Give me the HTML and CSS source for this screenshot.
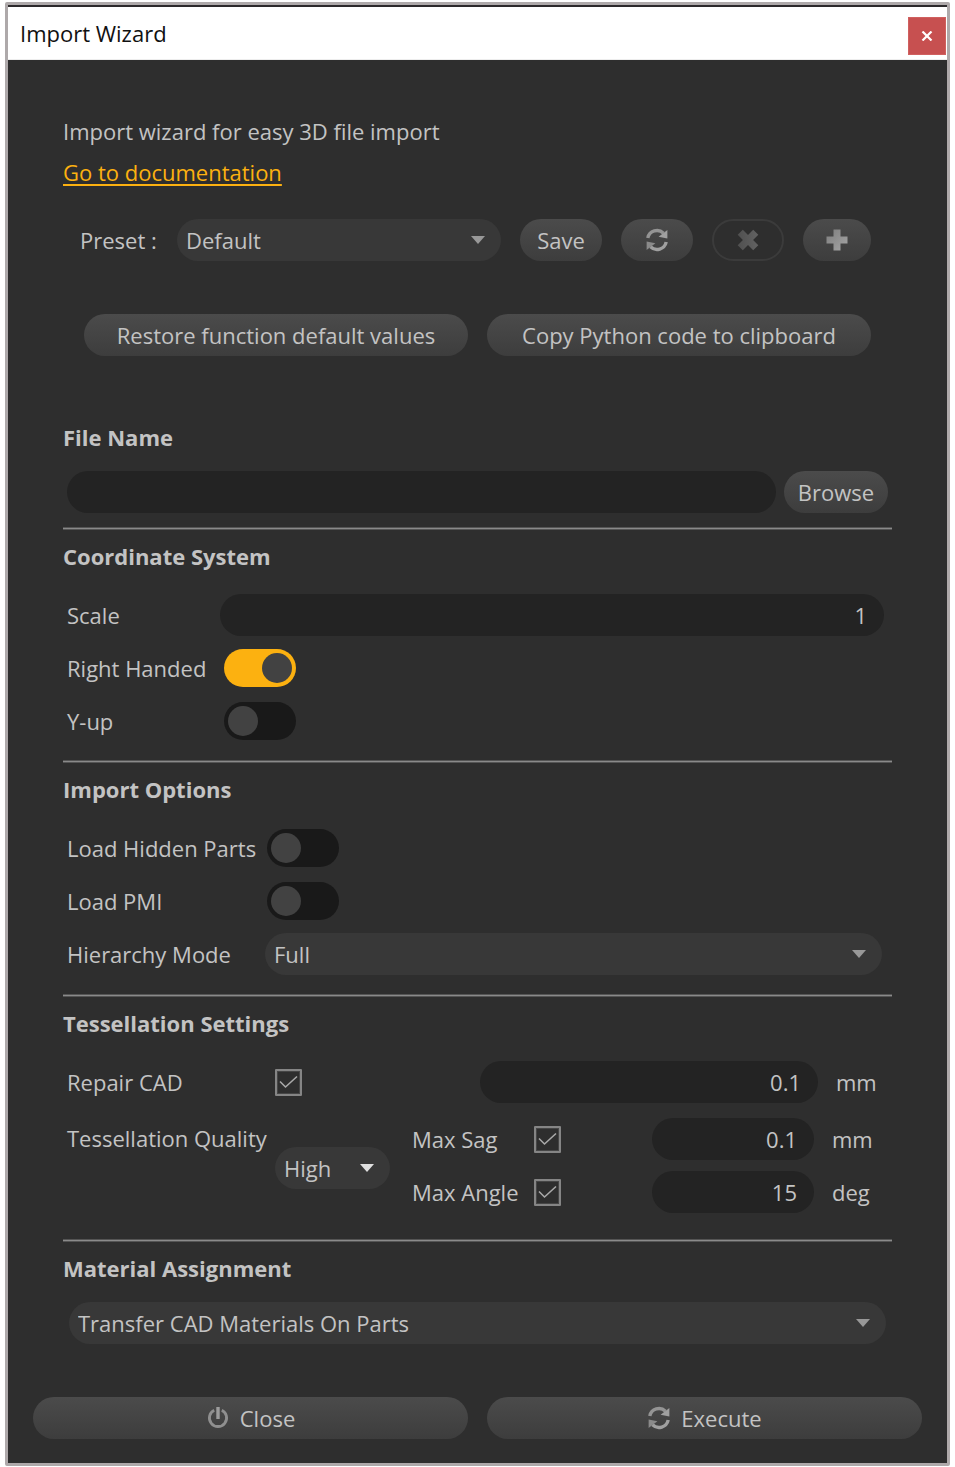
FILE: index.html
```html
<!DOCTYPE html>
<html lang="en">
<head>
<meta charset="utf-8">
<meta name="viewport" content="width=device-width, initial-scale=1">
<title>Import Wizard</title>
<link rel="stylesheet" href="styles.css">
</head>
<body>
<svg class="defs" width="0" height="0" aria-hidden="true">
  <defs>
    <linearGradient id="shine" x1="0" y1="0" x2="1" y2="1">
      <stop offset="0" stop-color="#7d7d7d"/>
      <stop offset="1" stop-color="#a6a6a6"/>
    </linearGradient>
    <linearGradient id="dim" x1="0" y1="0" x2="1" y2="0">
      <stop offset="0" stop-color="#505050"/>
      <stop offset="1" stop-color="#626262"/>
    </linearGradient>
    <symbol id="refresh" viewBox="0 0 24 24">
      <path d="M2.800 10 A9.400 9.400 0 0 1 18.500 5.200" fill="none" stroke="#949494" stroke-width="3.400"/>
      <path d="M22.400 2 V10.500 L13.600 8.800 Z" fill="#a0a0a0"/>
      <path d="M21.200 14 A9.400 9.400 0 0 1 5.500 18.800" fill="none" stroke="#a0a0a0" stroke-width="3.400"/>
      <path d="M1.600 22 V13.500 L10.400 15.200 Z" fill="#8a8a8a"/>
    </symbol>
    <symbol id="arrow" viewBox="0 0 14 8">
      <path d="M0 0 H14 L7 8 Z" fill="currentColor"/>
    </symbol>
    <symbol id="tick" viewBox="0 0 27 27">
      <path d="M5 12.500 L10.500 18 L22 7.500" fill="none" stroke="#a9a9a9" stroke-width="1.600"/>
    </symbol>
  </defs>
</svg>

<main class="window">
  <header class="titlebar">
    <h1 class="title">Import Wizard</h1>
    <button class="close-window" type="button" aria-label="Close window">
      <svg width="12" height="10" viewBox="0 0 12 10"><path d="M1.500 0.500 L10.500 9.500 M10.500 0.500 L1.500 9.500" stroke="#fff" stroke-width="2.200"/></svg>
    </button>
  </header>

  <form class="content">
    <p class="intro">Import wizard for easy 3D file import</p>
    <a class="doc-link" href="#documentation">Go to documentation</a>

    <div class="preset-row">
      <label class="preset-label" for="preset">Preset :</label>
      <span class="select grow">
        <select id="preset"><option>Default</option></select>
        <svg class="arrow"><use href="#arrow"/></svg>
      </span>
      <button class="btn btn-save" type="button">Save</button>
      <button class="btn btn-icon" type="button" aria-label="Reload preset"><svg class="icon"><use href="#refresh"/></svg></button>
      <button class="btn btn-icon btn-disabled" type="button" aria-label="Delete preset" disabled>
        <svg class="icon" viewBox="0 0 24 24"><path d="M6.800 1.700 L12 6.900 L17.200 1.700 L22.300 6.800 L17.100 12 L22.300 17.200 L17.200 22.300 L12 17.100 L6.800 22.300 L1.700 17.200 L6.900 12 L1.700 6.800 Z" fill="url(#dim)"/></svg>
      </button>
      <button class="btn btn-add" type="button" aria-label="Add preset">
        <svg class="icon" viewBox="0 0 24 24"><path d="M8.500 1.500 H15.500 V8.500 H22.500 V15.500 H15.500 V22.500 H8.500 V15.500 H1.500 V8.500 H8.500 Z" fill="url(#shine)"/></svg>
      </button>
    </div>

    <div class="action-row">
      <button class="btn" type="button">Restore function default values</button>
      <button class="btn" type="button">Copy Python code to clipboard</button>
    </div>

    <section class="section section-file">
      <h2 class="heading"><label for="file">File Name</label></h2>
      <div class="file-row">
        <input class="field grow" id="file" type="text">
        <button class="btn btn-browse" type="button">Browse</button>
      </div>
    </section>

    <section class="section section-coords">
      <h2 class="heading">Coordinate System</h2>
      <div class="rows">
        <label for="scale">Scale</label>
        <input class="field" id="scale" type="text" value="1">
        <label for="right">Right Handed</label>
        <input class="toggle" id="right" type="checkbox" checked>
        <label for="yup">Y-up</label>
        <input class="toggle" id="yup" type="checkbox">
      </div>
    </section>

    <section class="section section-import">
      <h2 class="heading">Import Options</h2>
      <div class="rows">
        <label for="hidden">Load Hidden Parts</label>
        <input class="toggle" id="hidden" type="checkbox">
        <label for="pmi">Load PMI</label>
        <input class="toggle" id="pmi" type="checkbox">
        <label for="hierarchy">Hierarchy Mode</label>
        <span class="select">
          <select id="hierarchy"><option>Full</option></select>
          <svg class="arrow"><use href="#arrow"/></svg>
        </span>
      </div>
    </section>

    <section class="section section-tess">
      <h2 class="heading">Tessellation Settings</h2>
      <div class="repair-row">
        <label for="repair">Repair CAD</label>
        <span class="check"><input id="repair" type="checkbox" checked><svg><use href="#tick"/></svg></span>
        <input class="field" type="text" value="0.1" aria-label="Repair tolerance">
        <span class="unit">mm</span>
      </div>
      <div class="quality-row">
        <label class="quality-label" for="quality">Tessellation Quality</label>
        <span class="select select-quality">
          <select id="quality"><option>High</option></select>
          <svg class="arrow arrow-bright"><use href="#arrow"/></svg>
        </span>
        <div class="limits">
          <label for="sag">Max Sag</label>
          <span class="check"><input id="sag" type="checkbox" checked><svg><use href="#tick"/></svg></span>
          <input class="field" type="text" value="0.1" aria-label="Max sag value">
          <span class="unit">mm</span>
          <label for="angle">Max Angle</label>
          <span class="check"><input id="angle" type="checkbox" checked><svg><use href="#tick"/></svg></span>
          <input class="field" type="text" value="15" aria-label="Max angle value">
          <span class="unit">deg</span>
        </div>
      </div>
    </section>

    <section class="section section-material">
      <h2 class="heading"><label for="material">Material Assignment</label></h2>
      <span class="select">
        <select id="material"><option>Transfer CAD Materials On Parts</option></select>
        <svg class="arrow"><use href="#arrow"/></svg>
      </span>
    </section>
  </form>

  <footer class="footer">
    <button class="btn" type="button">
      <svg class="icon" viewBox="0 0 24 24"><path d="M8.200 4.200 A8.600 8.600 0 1 0 15.800 4.200" fill="none" stroke="#8f8f8f" stroke-width="2.800"/><path d="M12 1 V13" stroke="#9c9c9c" stroke-width="3.400"/></svg>
      Close
    </button>
    <button class="btn" type="button">
      <svg class="icon"><use href="#refresh"/></svg>
      Execute
    </button>
  </footer>
</main>
</body>
</html>
```
FILE: styles.css
```css
* {
  box-sizing: border-box;
}

body {
  margin: 0;
  padding: 2px 5px 1px;
  background: #fff;
  color: #c3c3c3;
  font: 22px/30px "Open Sans", "Noto Sans", sans-serif;
}

button,
input,
select {
  margin: 0;
  font: inherit;
  color: inherit;
}

.defs {
  position: absolute;
}

.window {
  border: 3px solid #aea9aa;
  border-radius: 2px;
  background: #2e2e2e;
}

.titlebar {
  display: flex;
  align-items: center;
  justify-content: space-between;
  height: 55px;
  padding: 0 1px 0 12px;
  border-top: 2px solid #2c292b;
  border-bottom: 1px solid #ededed;
  background: #fff;
  color: #111;
}

.title {
  margin: 0;
  font-size: 22px;
  font-weight: 400;
}

.close-window {
  display: grid;
  place-items: center;
  width: 38px;
  height: 38px;
  margin-top: 6px;
  padding: 0;
  border: 1px solid #d0605f;
  background: #c75050;
}

.content {
  padding: 56px 55px 0;
}

.intro {
  margin: 0 0 11px;
}

.doc-link {
  display: block;
  width: fit-content;
  color: #fcb110;
  text-decoration-thickness: 2px;
  text-underline-offset: 3px;
}

.grow {
  flex: 1;
  min-width: 0;
}

.btn {
  display: flex;
  align-items: center;
  justify-content: center;
  gap: 10px;
  height: 42px;
  padding: 0;
  border: 0;
  border-radius: 21px;
  background: linear-gradient(#4b4b4b, #3d3d3d);
}

.icon {
  width: 24px;
  height: 24px;
}

.btn-save {
  width: 82px;
}

.btn-icon {
  width: 72px;
}

.btn-add {
  width: 68px;
}

.btn-disabled {
  border: 2px solid #3b3b3b;
  background: none;
}

.btn-browse {
  width: 104px;
}

.field {
  width: 100%;
  height: 42px;
  padding: 0 17px;
  border: 0;
  border-radius: 21px;
  background: #232323;
  text-align: right;
}

.select {
  display: grid;
  align-items: center;
}

.select > * {
  grid-area: 1 / 1;
}

.select select {
  width: 100%;
  height: 42px;
  padding: 0 40px 0 9px;
  border: 0;
  border-radius: 21px;
  background: #383838;
  appearance: none;
}

.arrow {
  justify-self: end;
  width: 14px;
  height: 8px;
  margin-right: 16px;
  color: #989898;
  pointer-events: none;
}

.arrow-bright {
  color: #e0e0e0;
}

.toggle {
  display: flex;
  align-items: center;
  width: 72px;
  height: 38px;
  margin-left: 2px;
  padding: 0 4px;
  border-radius: 19px;
  background: #191919;
  appearance: none;
}

.toggle::before {
  width: 30px;
  height: 30px;
  border-radius: 50%;
  background: #424242;
  content: "";
}

.toggle:checked {
  justify-content: flex-end;
  background: #fcb110;
}

.section-coords .toggle {
  margin-left: 4px;
}

.check {
  display: grid;
  width: 27px;
  height: 27px;
}

.check > * {
  grid-area: 1 / 1;
  width: 27px;
  height: 27px;
}

.check input {
  border: 2px solid #858585;
  border-radius: 1px;
  box-shadow: inset 0 0 0 1px #464646;
  appearance: none;
}

.check svg {
  pointer-events: none;
}

.preset-row {
  display: flex;
  align-items: center;
  gap: 19px;
  margin: 32px 21px 0 17px;
}

.preset-label {
  width: 78px;
  white-space: nowrap;
}

.action-row {
  display: grid;
  grid-template-columns: 1fr 1fr;
  gap: 19px;
  margin: 53px 21px 66px;
}

.section {
  padding: 13px 0 18px;
  border-top: 1px solid #555;
  box-shadow: inset 0 1px #8a8a8a, inset 0 2px #555;
}

.section-file {
  padding: 0 0 14px;
  border-top: 0;
  box-shadow: none;
}

.section-import {
  padding-bottom: 19px;
}

.section-tess {
  padding-bottom: 26px;
}

.section-material {
  padding-bottom: 0;
}

.heading {
  margin: 0 0 23px;
  font-size: 22px;
  font-weight: 700;
}

.section-file .heading,
.section-material .heading {
  margin-bottom: 19px;
}

.file-row {
  display: flex;
  gap: 8px;
  margin: 0 4px;
}

.rows {
  display: grid;
  grid-auto-rows: 42px;
  row-gap: 11px;
  align-items: center;
  padding-left: 4px;
}

.section-coords .rows {
  grid-template-columns: 153px 1fr;
  padding-right: 8px;
}

.section-import .rows {
  grid-template-columns: 198px 1fr;
  padding-right: 10px;
}

.repair-row {
  display: grid;
  grid-template-columns: 208px 205px 1fr 74px;
  align-items: center;
  padding: 0 0 0 4px;
}

.unit {
  padding-left: 18px;
}

.quality-row {
  display: grid;
  grid-template-columns: 208px 115px 1fr;
  align-items: center;
  margin-top: 15px;
  padding-left: 4px;
}

.quality-label {
  align-self: start;
  padding-top: 5px;
}

.select-quality {
  margin-top: 4px;
}

.limits {
  display: grid;
  grid-template-columns: 122px 118px 1fr 60px;
  grid-auto-rows: 42px;
  row-gap: 11px;
  align-items: center;
  margin: 0 18px 0 22px;
}

.section-material .select {
  margin: 0 6px;
}

.footer {
  display: grid;
  grid-template-columns: 1fr 1fr;
  gap: 19px;
  padding: 53px 25px 24px;
}
```
